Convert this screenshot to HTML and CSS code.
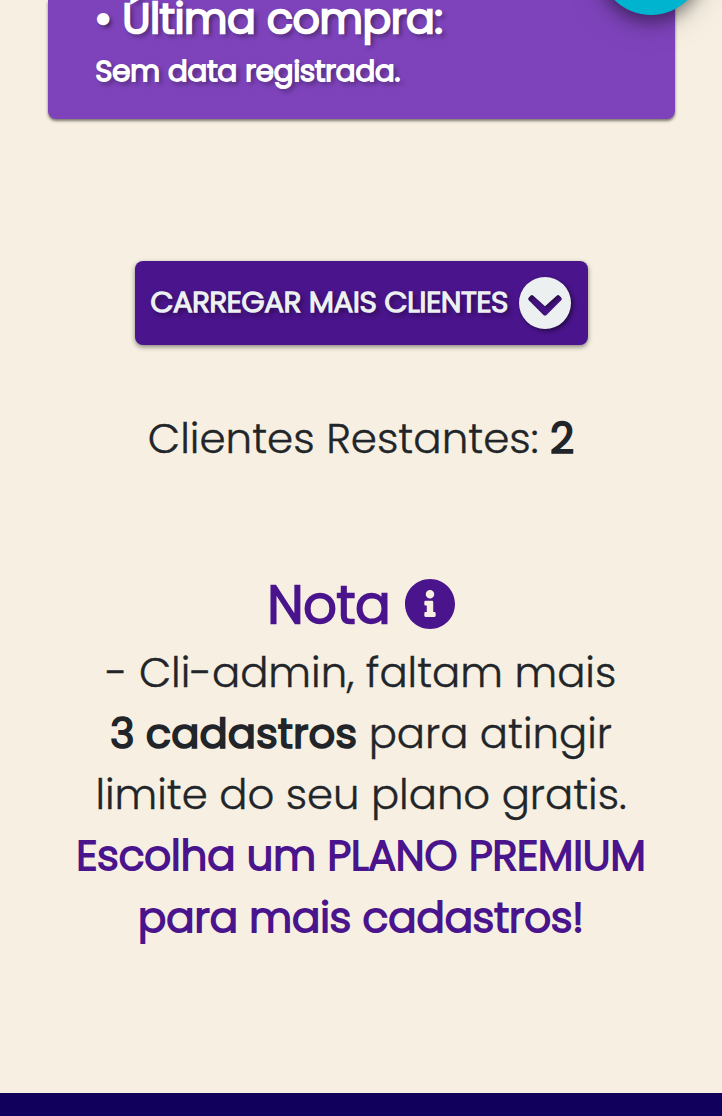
FILE: index.html
```html
<!DOCTYPE html>
<html lang="pt-BR">
<head>
<meta charset="utf-8">
<title>Clientes</title>
<link rel="stylesheet" href="styles.css">
</head>
<body>
<main class="page">
  <section class="card">
    <h2 class="card-title">• Última compra:</h2>
    <p class="card-text">Sem data registrada.</p>
  </section>
  <button class="load-more" type="button">
    <span class="load-more-label">CARREGAR MAIS CLIENTES</span>
    <svg class="chevron" viewBox="0 0 52 52" aria-hidden="true">
      <path fill-rule="evenodd" d="M26 0a26 26 0 1 0 0 52a26 26 0 1 0 0-52zM26 38.500a2 2 0 0 1-1.500-.600L9.800 23.200a2 2 0 0 1 0-2.800L11.500 18.700a2 2 0 0 1 2.800 0L26 29.300L37.700 18.700a2 2 0 0 1 2.800 0L42.200 20.400a2 2 0 0 1 0 2.800L27.500 37.900a2 2 0 0 1-1.500 .600z"/>
    </svg>
  </button>
  <p class="remaining">Clientes Restantes: <b>2</b></p>
  <section class="note">
    <h1 class="note-title"><span>Nota</span>
      <svg class="info" viewBox="8 8 496 496" aria-hidden="true"><path d="M256 8C119 8 8 119 8 256s111 248 248 248 248-111 248-248S393 8 256 8zm0 110c23.200 0 42 18.800 42 42s-18.800 42-42 42-42-18.800-42-42 18.800-42 42-42zm56 254c0 6.600-5.400 12-12 12h-88c-6.600 0-12-5.400-12-12v-24c0-6.600 5.400-12 12-12h12v-64h-12c-6.600 0-12-5.400-12-12v-24c0-6.600 5.400-12 12-12h64c6.600 0 12 5.400 12 12v100h12c6.600 0 12 5.400 12 12v24z"/></svg>
    </h1>
    <p class="note-line">- Cli-admin, faltam mais</p>
    <p class="note-line"><b>3 cadastros</b> para atingir</p>
    <p class="note-line">limite do seu plano gratis.</p>
    <p class="note-line premium">Escolha um PLANO PREMIUM</p>
    <p class="note-line premium">para mais cadastros!</p>
  </section>
  <footer class="footer"></footer>
</main>
<div class="fab"></div>
</body>
</html>
```
FILE: styles.css
```css
* { box-sizing: border-box; }
body {
  margin: 0;
  background: #f7f0e2;
  color: #212529;
  font-family: Poppins, Inter, sans-serif;
  overflow: hidden;
}
h1, h2, p { margin: 0; white-space: nowrap; }
.page {
  height: 1116px;
  display: flex;
  flex-direction: column;
  align-items: center;
}
.card {
  width: 627px;
  height: 119px;
  flex: none;
  display: flex;
  flex-direction: column;
  justify-content: flex-end;
  padding: 0 48px 26px;
  background: #7e43bb;
  border-radius: 0 0 8px 8px;
  box-shadow: 0 2px 3px rgba(0, 0, 0, .5);
  color: #fff;
  text-shadow: 3px 3px 5px rgba(0, 0, 0, .6);
}
.card-title { font-size: 42px; line-height: 50px; font-weight: 300; margin-bottom: 5px; -webkit-text-stroke: 2.6px; }
.card-text { font-size: 29.1px; line-height: 44px; font-weight: 300; -webkit-text-stroke: 1.9px; }
.load-more {
  width: 453px;
  height: 84px;
  flex: none;
  margin-top: 142px;
  padding: 0 17px 0 16px;
  display: flex;
  align-items: center;
  justify-content: space-between;
  border: 0;
  border-radius: 8px;
  background: #4a148c;
  box-shadow: 0 2px 5px rgba(0, 0, 0, .45);
  color: #ecf0f1;
  font: 300 29.4px/44px Poppins, Inter, sans-serif;
  white-space: nowrap;
  text-shadow: 3px 3px 5px rgba(0, 0, 0, .6);
  -webkit-text-stroke: 1.7px;
}
.load-more-label { margin-top: -2px; }
.chevron { width: 52px; height: 52px; flex: none; overflow: visible; fill: #ecf0f1; stroke: none; filter: drop-shadow(2px 2px 2px rgba(0, 0, 0, .5)); }
.remaining { margin-top: 63px; font-size: 42px; line-height: 61px; font-weight: 300; -webkit-text-stroke: .4px; }
.note { width: 100%; margin-top: 105px; display: flex; flex-direction: column; align-items: center; }
.note-title {
  display: flex;
  align-items: center;
  gap: 14px;
  color: #4a148c;
  font-size: 52.2px;
  line-height: 62px;
  font-weight: 300;
  margin-bottom: 5.5px;
  -webkit-text-stroke: 2.4px;
}
.info { width: 50px; height: 50px; fill: currentColor; stroke: none; margin-top: -3px; }
.note-line { font-size: 41.8px; line-height: 61.3px; font-weight: 300; -webkit-text-stroke: .4px; }
b { font-weight: 400; -webkit-text-stroke: 1.6px; }
.premium { color: #4a148c; -webkit-text-stroke: 2px; }
.footer { width: 100%; height: 23px; flex: none; margin-top: auto; background: #11005c; }
.fab {
  position: absolute;
  top: -89px;
  left: 599px;
  width: 104px;
  height: 104px;
  border-radius: 50%;
  background: #00b4d0;
  box-shadow: 0 6px 16px rgba(0, 0, 0, .4), 0 6px 36px rgba(0, 0, 0, .18);
}
```
